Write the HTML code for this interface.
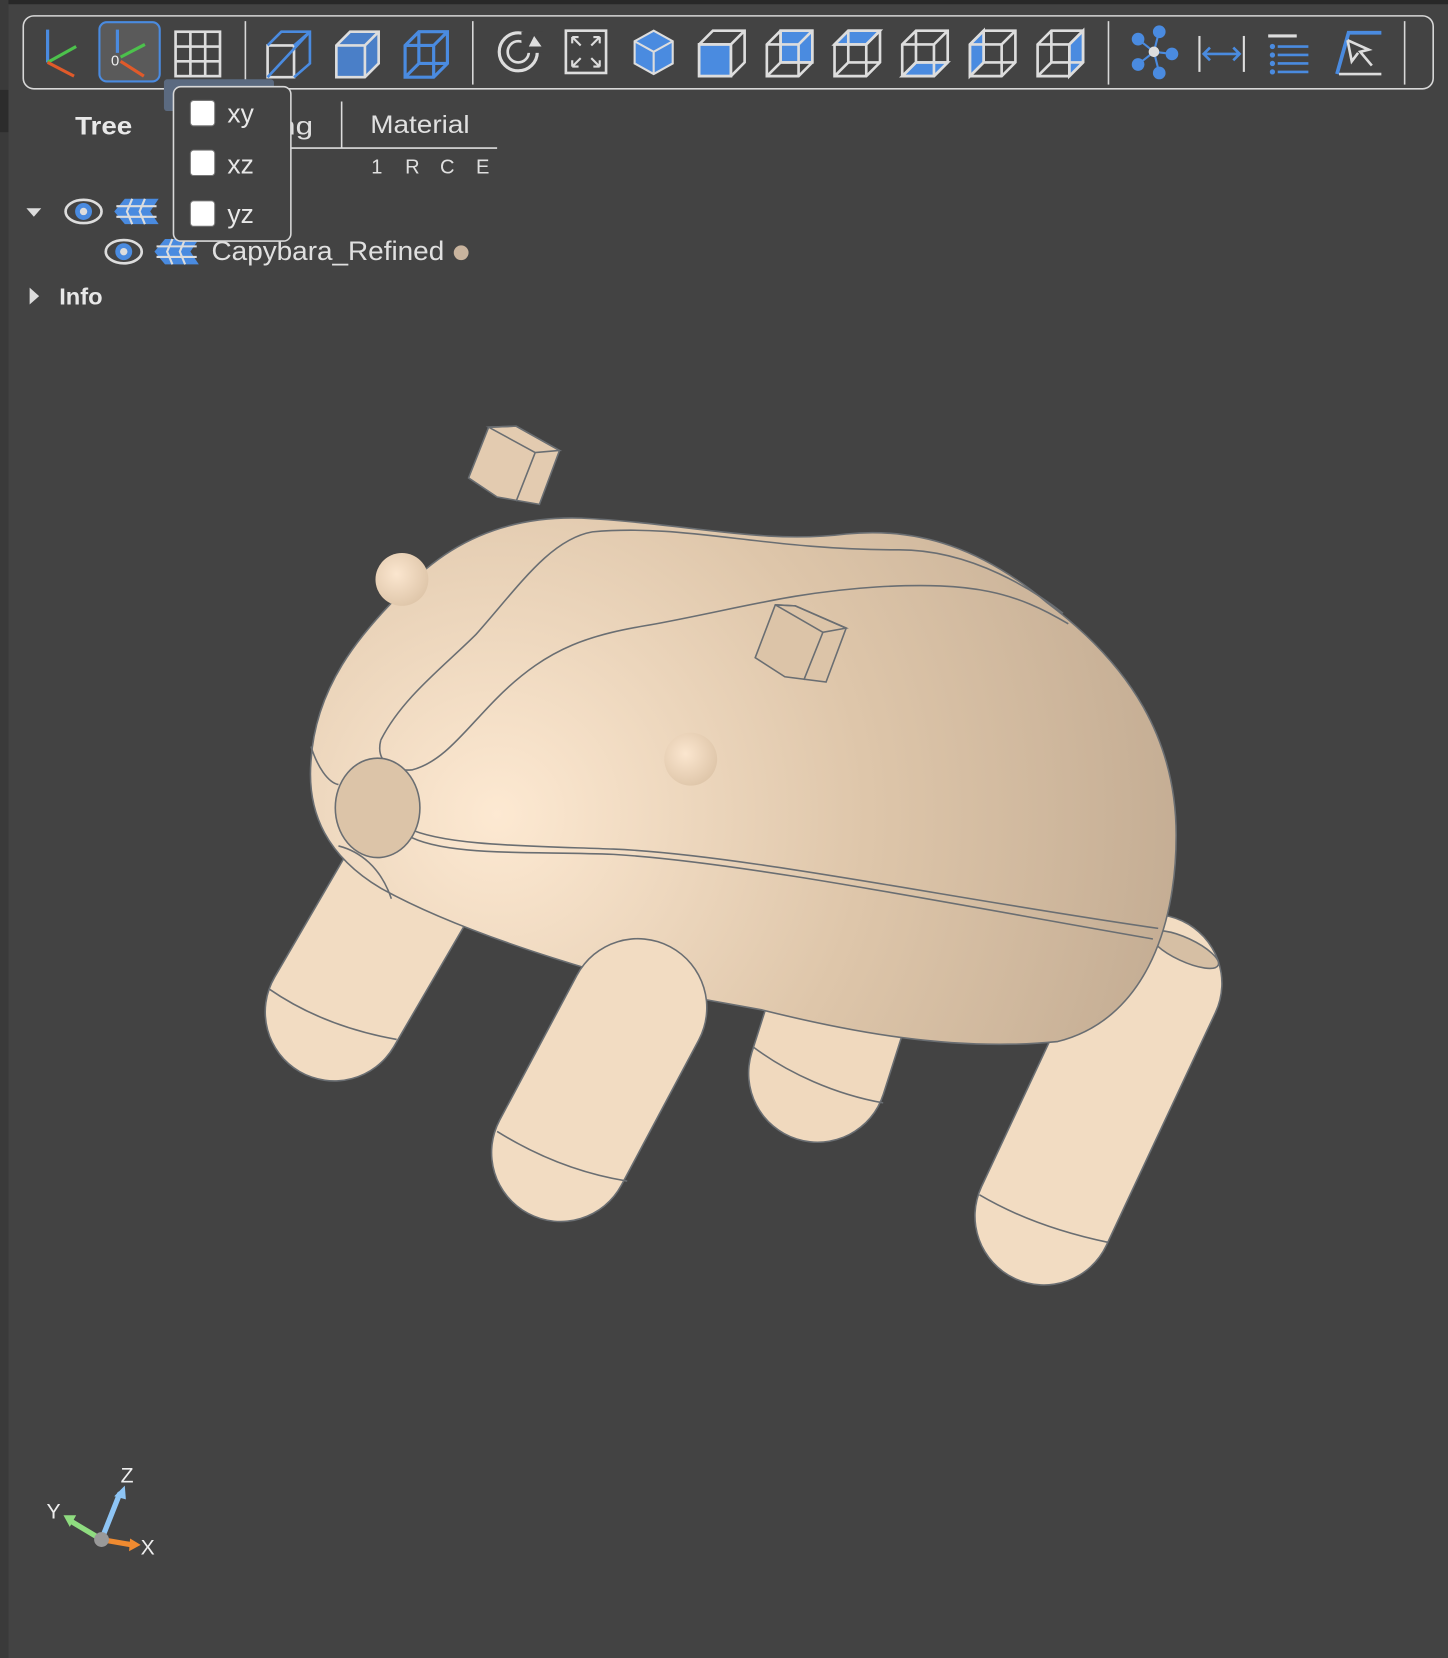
<!DOCTYPE html>
<html><head><meta charset="utf-8"><style>
html,body{margin:0;padding:0;background:#434343;width:1448px;height:1658px;overflow:hidden}
svg{display:block}
text{font-family:"Liberation Sans",sans-serif}
</style></head><body>
<svg width="1448" height="1658" viewBox="0 0 1369 1568" preserveAspectRatio="none" xmlns="http://www.w3.org/2000/svg">
<defs>
<radialGradient id="g" cx="470" cy="770" r="700" gradientUnits="userSpaceOnUse">
<stop offset="0" stop-color="#fde9d2"/><stop offset="0.5" stop-color="#dec6aa"/><stop offset="1" stop-color="#c0a990"/></radialGradient>
<radialGradient id="sp" cx="0.4" cy="0.4" r="0.7"><stop offset="0" stop-color="#fbe6cf"/><stop offset="1" stop-color="#dcc3a6"/></radialGradient>
</defs>
<rect width="1369" height="1568" fill="#434343"/>
<rect width="1369" height="4" fill="#282828"/>
<rect x="0" y="0" width="8" height="1568" fill="#3a3a3a"/>
<rect x="0" y="85" width="8" height="40" fill="#2c2c2c"/>
<!-- toolbar -->
<rect x="22" y="15" width="1333" height="69" rx="10" fill="none" stroke="#d8d8d8" stroke-width="1.5"/>
<g stroke="#d8d8d8" stroke-width="1.5"><line x1="232" y1="20" x2="232" y2="80"/><line x1="447" y1="20" x2="447" y2="80"/><line x1="1048" y1="20" x2="1048" y2="80"/><line x1="1328" y1="20" x2="1328" y2="80"/></g>
<g stroke-width="3" fill="none"><line x1="45" y1="28" x2="45" y2="59" stroke="#4a8be0"/><line x1="45" y1="59" x2="72" y2="44" stroke="#4cc24c"/><line x1="45" y1="59" x2="70" y2="72" stroke="#e05a2a"/></g>
<rect x="94" y="21" width="57" height="56" rx="7" fill="#5a5a5a" stroke="#4a8be0" stroke-width="2"/>
<g stroke-width="3" fill="none"><line x1="111" y1="28" x2="111" y2="50" stroke="#4a8be0"/><line x1="114" y1="54" x2="137" y2="42" stroke="#4cc24c"/><line x1="114" y1="58" x2="136" y2="72" stroke="#e05a2a"/></g>
<text x="105" y="62" font-size="14" fill="#eee">0</text>
<g stroke="#ddd" stroke-width="2.5" fill="none"><rect x="166" y="30" width="42" height="42"/><line x1="180" y1="30" x2="180" y2="72"/><line x1="194" y1="30" x2="194" y2="72"/><line x1="166" y1="44" x2="208" y2="44"/><line x1="166" y1="58" x2="208" y2="58"/></g>
<g stroke-width="2.5" fill="none">
<rect x="253" y="43" width="25" height="30" stroke="#ddd"/><path d="M253 43 L266 30 H293 V60 L278 73 M278 43 L293 30 M253 73 L293 30" stroke="#4a8be0"/>
<path d="M318 43 L331 30 H358 V60 L345 73 H318 Z" fill="#4a7fc8" stroke="#ddd"/><path d="M318 43 H345 L358 30 M345 43 V73" stroke="#ddd"/>
<path d="M383 43 L396 30 H423 V60 L410 73 H383 Z M383 43 H410 L423 30 M410 43 V73 M396 30 V60 H423 M396 60 L383 73" stroke="#4a8be0" stroke-width="3"/>
</g>
<circle cx="490" cy="49" r="18" fill="none" stroke="#ddd" stroke-width="3"/><circle cx="490" cy="49" r="10" fill="none" stroke="#ddd" stroke-width="2.5"/><rect x="493" y="30" width="20" height="20" fill="#434343"/><path d="M505 34 L512 44 L500 44 Z" fill="#ddd"/>
<rect x="535" y="29" width="38" height="40" fill="none" stroke="#ddd" stroke-width="2.5"/>
<g stroke="#ddd" stroke-width="2" fill="none"><path d="M541 35 L549 43 M541 35 V41 M541 35 H547 M567 35 L559 43 M567 35 V41 M567 35 H561 M541 63 L549 55 M541 63 V57 M541 63 H547 M567 63 L559 55 M567 63 V57 M567 63 H561"/></g>
<path d="M618 29 L636 39 V60 L618 70 L600 60 V39 Z" fill="#4a8be0" stroke="#ddd" stroke-width="2"/><path d="M600 39 L618 49 L636 39 M618 49 V70" stroke="#ddd" stroke-width="2" fill="none"/>
<g stroke="#ddd" stroke-width="2.5" fill="none">
<g transform="translate(661,29)"><rect x="0" y="13" width="30" height="30" fill="#4a8be0"/><path d="M0 13 L13 0 H43 V30 L30 43 M30 13 L43 0"/><rect x="0" y="13" width="30" height="30"/></g>
<g transform="translate(725,29)"><path d="M13 0 H43 V30 H13 Z" fill="#4a8be0"/><path d="M0 13 L13 0 H43 V30 L30 43 H0 Z M0 13 H30 L43 0 M30 13 V43 M13 0 V30 H43 M13 30 L0 43"/></g>
<g transform="translate(789,29)"><path d="M0 13 L13 0 H43 L30 13 Z" fill="#4a8be0"/><path d="M0 13 L13 0 H43 V30 L30 43 H0 Z M0 13 H30 L43 0 M30 13 V43 M13 0 V30 H43 M13 30 L0 43"/></g>
<g transform="translate(853,29)"><path d="M0 43 L13 30 H43 L30 43 Z" fill="#4a8be0"/><path d="M0 13 L13 0 H43 V30 L30 43 H0 Z M0 13 H30 L43 0 M30 13 V43 M13 0 V30 H43 M13 30 L0 43"/></g>
<g transform="translate(917,29)"><path d="M0 13 L13 0 V30 L0 43 Z" fill="#4a8be0"/><path d="M0 13 L13 0 H43 V30 L30 43 H0 Z M0 13 H30 L43 0 M30 13 V43 M13 0 V30 H43 M13 30 L0 43"/></g>
<g transform="translate(981,29)"><path d="M30 13 L43 0 V30 L30 43 Z" fill="#4a8be0"/><path d="M0 13 L13 0 H43 V30 L30 43 H0 Z M0 13 H30 L43 0 M30 13 V43 M13 0 V30 H43 M13 30 L0 43"/></g>
</g>
<g fill="#4a8be0" stroke="#4a8be0" stroke-width="2"><line x1="1091" y1="49" x2="1076" y2="37"/><line x1="1091" y1="49" x2="1076" y2="61"/><line x1="1091" y1="49" x2="1096" y2="29"/><line x1="1091" y1="49" x2="1096" y2="69"/><line x1="1091" y1="49" x2="1108" y2="51"/>
<circle cx="1076" cy="37" r="5"/><circle cx="1076" cy="61" r="5"/><circle cx="1096" cy="30" r="5"/><circle cx="1096" cy="69" r="5"/><circle cx="1108" cy="51" r="5"/></g><circle cx="1091" cy="49" r="5" fill="#ddd"/>
<g stroke="#ddd" stroke-width="2"><line x1="1134" y1="34" x2="1134" y2="68"/><line x1="1176" y1="34" x2="1176" y2="68"/></g>
<path d="M1138 51 H1172 M1144 45 L1138 51 L1144 57 M1166 45 L1172 51 L1166 57" stroke="#4a8be0" stroke-width="2.5" fill="none"/>
<line x1="1199" y1="34" x2="1226" y2="34" stroke="#ddd" stroke-width="3"/>
<g fill="#4a8be0"><circle cx="1203" cy="44" r="2.5"/><circle cx="1203" cy="52" r="2.5"/><circle cx="1203" cy="60" r="2.5"/><circle cx="1203" cy="68" r="2.5"/></g>
<g stroke="#4a8be0" stroke-width="2.5"><line x1="1208" y1="44" x2="1237" y2="44"/><line x1="1208" y1="52" x2="1237" y2="52"/><line x1="1208" y1="60" x2="1237" y2="60"/><line x1="1208" y1="68" x2="1237" y2="68"/></g>
<path d="M1264 70 L1275 31 H1306" stroke="#4a8be0" stroke-width="3.5" fill="none"/><line x1="1266" y1="70" x2="1306" y2="70" stroke="#ddd" stroke-width="2.5"/>
<path d="M1274 38 L1294 47 L1286 49 L1297 62 M1274 38 L1278 58 L1284 50" stroke="#ddd" stroke-width="2.5" fill="none"/>
<!-- panel tabs -->
<text x="71" y="127" font-size="24" font-weight="bold" fill="#e8e8e8" textLength="54" lengthAdjust="spacingAndGlyphs">Tree</text>
<text x="263" y="127" font-size="24" fill="#e0e0e0" textLength="33" lengthAdjust="spacingAndGlyphs">ng</text>
<line x1="323" y1="96" x2="323" y2="140" stroke="#ddd" stroke-width="1.5"/>
<text x="350" y="126" font-size="24" fill="#e0e0e0" textLength="94" lengthAdjust="spacingAndGlyphs">Material</text>
<line x1="210" y1="140" x2="470" y2="140" stroke="#ddd" stroke-width="1.5"/>
<g font-size="19" fill="#e0e0e0"><text x="351" y="164">1</text><text x="383" y="164">R</text><text x="416" y="164">C</text><text x="450" y="164">E</text></g>
<!-- tree -->
<path d="M25 197 L39 197 L32 205 Z" fill="#ddd"/>
<g><ellipse cx="79" cy="200" rx="17" ry="11" fill="none" stroke="#ddd" stroke-width="2.5"/><circle cx="79" cy="200" r="8" fill="#4a8be0"/><circle cx="79" cy="200" r="3.5" fill="#ddd"/></g>
<path d="M108 200 L118 188 H150 L142 200 L150 212 H118 Z" fill="#4a8be0"/><path d="M110 195 H148 M110 205 H148 M125 188 L120 200 L125 212 M137 188 L132 200 L137 212" stroke="#ddd" stroke-width="2" fill="none"/>
<g><ellipse cx="117" cy="238" rx="17" ry="11" fill="none" stroke="#ddd" stroke-width="2.5"/><circle cx="117" cy="238" r="8" fill="#4a8be0"/><circle cx="117" cy="238" r="3.5" fill="#ddd"/></g>
<path d="M146 238 L156 226 H188 L180 238 L188 250 H156 Z" fill="#4a8be0"/><path d="M148 233 H186 M148 243 H186 M163 226 L158 238 L163 250 M175 226 L170 238 L175 250" stroke="#ddd" stroke-width="2" fill="none"/>
<text x="200" y="246" font-size="25" fill="#e0e0e0" textLength="220" lengthAdjust="spacingAndGlyphs">Capybara_Refined</text>
<circle cx="436" cy="239" r="7" fill="#c9b49e"/>
<path d="M28 272 L37 280 L28 288 Z" fill="#ddd"/>
<text x="56" y="288" font-size="22" font-weight="bold" fill="#e8e8e8" textLength="41" lengthAdjust="spacingAndGlyphs">Info</text>
<!-- dropdown -->
<rect x="155" y="75" width="104" height="30" rx="3" fill="#5b6a80"/>
<rect x="164" y="82" width="111" height="146" rx="7" fill="#434343" stroke="#d8d8d8" stroke-width="1.5"/>
<g fill="#fff" stroke="#777" stroke-width="1"><rect x="180" y="95" width="23" height="24" rx="3"/><rect x="180" y="142" width="23" height="24" rx="3"/><rect x="180" y="190" width="23" height="24" rx="3"/></g>
<g font-size="25" fill="#e8e8e8"><text x="215" y="116">xy</text><text x="215" y="164">xz</text><text x="215" y="211">yz</text></g>
<!-- capybara -->
<g stroke="#6a6e72" stroke-width="1.5">
<line x1="800" y1="930" x2="773" y2="1015" stroke="#6a6e72" stroke-width="132" stroke-linecap="round"/>
<line x1="800" y1="930" x2="773" y2="1015" stroke="#f0d9be" stroke-width="129" stroke-linecap="round"/>
<line x1="1090" y1="930" x2="987" y2="1150" stroke="#6a6e72" stroke-width="132" stroke-linecap="round"/>
<line x1="1090" y1="930" x2="987" y2="1150" stroke="#f2dcc2" stroke-width="129" stroke-linecap="round"/>
<ellipse cx="1120" cy="898" rx="35" ry="11" transform="rotate(25 1120 898)" fill="#d6bfa4"/>
<line x1="390" y1="830" x2="316" y2="957" stroke="#6a6e72" stroke-width="132" stroke-linecap="round"/>
<line x1="390" y1="830" x2="316" y2="957" stroke="#f2dcc2" stroke-width="129" stroke-linecap="round"/>
<path d="M294 720 C298 650 340 600 380 560 C430 505 490 488 550 490 C650 495 720 515 800 505 C870 498 930 520 990 570 C1070 630 1112 700 1112 790 C1112 880 1080 965 1000 985 C900 995 800 975 720 955 L665 945 C600 930 450 890 360 840 C310 810 290 770 294 720 Z" fill="url(#g)"/>
<line x1="603" y1="953" x2="530" y2="1090" stroke="#6a6e72" stroke-width="132" stroke-linecap="round"/>
<line x1="603" y1="953" x2="530" y2="1090" stroke="#f2dcc2" stroke-width="129" stroke-linecap="round"/>
<rect x="520" y="940" width="150" height="6" fill="none" stroke="none"/>
<g fill="none">
<path d="M254 935 C290 960 330 975 375 983"/><path d="M470 1070 C510 1095 550 1110 593 1117"/>
<path d="M712 990 C745 1015 790 1035 835 1043"/><path d="M926 1130 C960 1150 1000 1165 1048 1175"/>
<path d="M360 700 C380 660 420 630 450 600 C490 555 520 510 560 503 C650 495 720 520 850 520 C920 520 980 560 1005 580"/>
<path d="M360 700 C355 720 370 730 390 728 C420 720 440 690 470 660 C520 610 560 600 620 590 C700 575 750 560 830 555 C920 550 960 560 1010 590"/>
<path d="M385 783 C420 800 500 800 580 803 C700 808 900 850 1095 878"/>
<path d="M385 790 C420 810 500 805 580 808 C700 815 900 855 1090 888"/>
<path d="M294 706 C300 725 310 740 320 742"/>
<path d="M320 800 C340 805 360 820 370 850"/>
</g>
<ellipse cx="357" cy="764" rx="40" ry="47" fill="#dcc4a8"/>
<circle cx="380" cy="548" r="25" fill="url(#sp)" stroke="none"/>
<circle cx="653" cy="718" r="25" fill="url(#sp)" stroke="none"/>
<path d="M443 452 L462 404 L488 403 L529 426 L510 477 L470 470 Z" fill="#e3cbb0"/><path d="M462 404 L488 403 L529 426 L506 428 Z M506 428 L488 474" fill="none"/>
<path d="M714 622 L733 572 L752 573 L800 594 L781 645 L742 640 Z" fill="#dcc4a8"/><path d="M733 572 L752 573 L800 594 L778 598 Z M778 598 L760 643" fill="none"/>
</g>
<!-- triad -->
<g stroke-width="5" stroke-linecap="round">
<line x1="96" y1="1456" x2="113" y2="1413" stroke="#8ec5f5"/>
<line x1="96" y1="1456" x2="66" y2="1438" stroke="#8fdc80"/>
<line x1="96" y1="1456" x2="125" y2="1461" stroke="#ef8a30"/>
</g>
<path d="M118 1405 L108 1415 L119 1418 Z" fill="#8ec5f5"/><path d="M60 1433 L72 1433 L66 1444 Z" fill="#8fdc80"/><path d="M133 1461 L123 1455 L122 1467 Z" fill="#ef8a30"/>
<circle cx="96" cy="1456" r="7" fill="#999"/>
<g font-size="20" fill="#eee"><text x="114" y="1402">Z</text><text x="44" y="1436">Y</text><text x="133" y="1470">X</text></g>
</svg>
</body></html>
